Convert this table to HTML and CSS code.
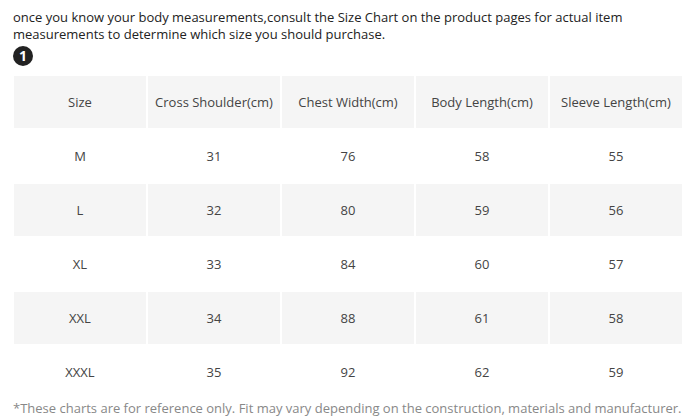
FILE: index.html
```html
<!DOCTYPE html>
<html>
<head>
<meta charset="utf-8">
<link rel="stylesheet" href="styles.css">
</head>
<body>
<div class="page">
  <p class="intro">once you know your body measurements,consult the Size Chart on the product pages for actual item measurements to determine which size you should purchase.</p>
  <div class="badge">1</div>
  <table class="chart">
    <tr class="shade"><td>Size</td><td>Cross Shoulder(cm)</td><td>Chest Width(cm)</td><td>Body Length(cm)</td><td>Sleeve Length(cm)</td></tr>
    <tr><td>M</td><td>31</td><td>76</td><td>58</td><td>55</td></tr>
    <tr class="shade"><td>L</td><td>32</td><td>80</td><td>59</td><td>56</td></tr>
    <tr><td>XL</td><td>33</td><td>84</td><td>60</td><td>57</td></tr>
    <tr class="shade"><td>XXL</td><td>34</td><td>88</td><td>61</td><td>58</td></tr>
    <tr><td>XXXL</td><td>35</td><td>92</td><td>62</td><td>59</td></tr>
  </table>
  <p class="note">*These charts are for reference only. Fit may vary depending on the construction, materials and manufacturer.</p>
</div>
</body>
</html>
```
FILE: styles.css
```css
html, body {
  margin: 0;
  padding: 0;
  background: #fff;
}
.page {
  width: 689px;
  height: 417px;
  overflow: hidden;
  font-family: "Open Sans", "Liberation Sans", sans-serif;
  font-size: 13px;
  color: #333;
  padding: 9px 0 0 13px;
  box-sizing: border-box;
}
.intro {
  margin: 0;
  line-height: 17px;
  width: 640px;
  color: #222;
}
.badge {
  width: 20px;
  height: 20px;
  border-radius: 50%;
  background: #222;
  color: #fff;
  font-weight: bold;
  font-size: 14px;
  line-height: 20px;
  text-align: center;
  margin: 3px 0 0 0;
}
.chart {
  border-collapse: separate;
  border-spacing: 2px;
  width: 672px;
  table-layout: fixed;
  margin: 8px 0 0 -1px;
}
.chart td {
  height: 52px;
  padding: 0;
  text-align: center;
  vertical-align: middle;
  color: #444;
  font-size: 13px;
}
.chart .shade td {
  background: #f5f5f5;
}
.note {
  margin: 0;
  color: #888;
  font-size: 13px;
  line-height: 17px;
  white-space: nowrap;
}
```
